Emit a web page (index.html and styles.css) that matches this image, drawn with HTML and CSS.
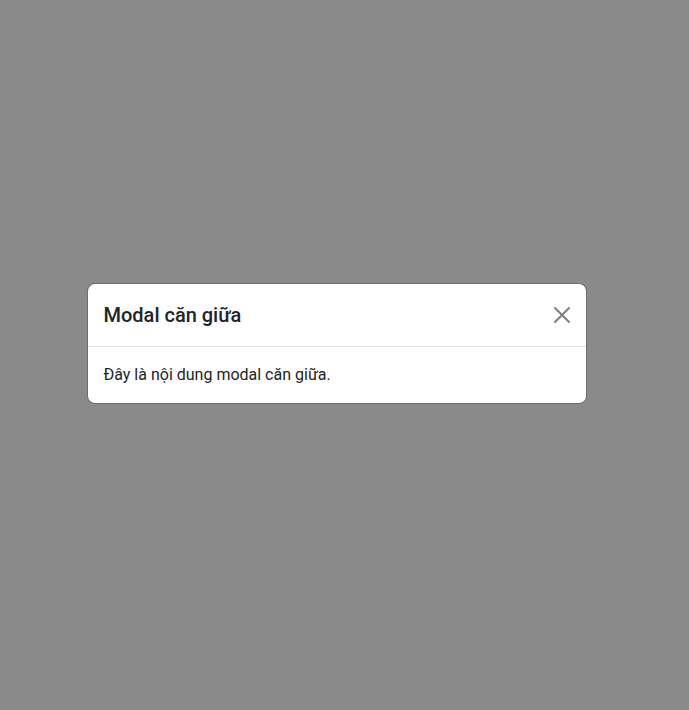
FILE: index.html
```html
<!DOCTYPE html>
<html lang="vi">
<head>
    <meta charset="UTF-8">
    <meta name="viewport" content="width=device-width, initial-scale=1.0">
    <title>Modal căn giữa</title>
    <link rel="stylesheet" href="styles.css">
</head>
<body>
    <div class="modal" role="dialog" aria-modal="true" aria-labelledby="modalTitle">
        <div class="modal-content">
            <div class="modal-header">
                <h5 class="modal-title" id="modalTitle">Modal căn giữa</h5>
                <button type="button" class="btn-close" aria-label="Close">
                    <svg viewBox="0 0 16 16" width="16" height="16" fill="currentColor" aria-hidden="true">
                        <path d="M.293.293a1 1 0 0 1 1.414 0L8 6.586 14.293.293a1 1 0 1 1 1.414 1.414L9.414 8l6.293 6.293a1 1 0 0 1-1.414 1.414L8 9.414l-6.293 6.293a1 1 0 0 1-1.414-1.414L6.586 8 .293 1.707a1 1 0 0 1 0-1.414z"/>
                    </svg>
                </button>
            </div>
            <div class="modal-body">
                Đây là nội dung modal căn giữa.
            </div>
        </div>
    </div>
</body>
</html>
```

FILE: styles.css
```css
* {
    margin: 0;
    padding: 0;
    box-sizing: border-box;
}

body {
    font-family: Roboto, "Liberation Sans", sans-serif;
    font-size: 16px;
    line-height: 24px;
    color: #212529;
    background-color: #8a8a8a;
}

.modal {
    display: flex;
    align-items: center;
    justify-content: center;
    min-height: 100vh;
    padding: 0 16px 24px 0;
}

.modal-content {
    width: 100%;
    max-width: 500px;
    background-color: #fff;
    background-clip: padding-box;
    border: 1px solid rgba(0, 0, 0, 0.2);
    border-radius: 8px;
}

.modal-header {
    display: flex;
    align-items: center;
    justify-content: space-between;
    padding: 16px;
    border-bottom: 1px solid #dee2e6;
}

.modal-title {
    font-size: 20px;
    font-weight: 500;
    line-height: 30px;
}

.btn-close {
    display: flex;
    border: 0;
    background: transparent;
    color: #000;
    opacity: 0.5;
    cursor: pointer;
}

.btn-close:hover {
    opacity: 0.75;
}

.modal-body {
    padding: 16px;
}
```
